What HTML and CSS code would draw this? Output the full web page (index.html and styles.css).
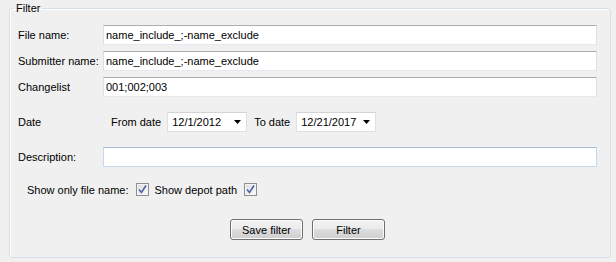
FILE: index.html
```html
<!DOCTYPE html>
<html lang="en">
  <head>
    <meta charset="UTF-8" />
    <title>Filter</title>
    <link rel="stylesheet" href="styles.css">
  </head>
  <body>
    <fieldset class="filter">
      <legend>Filter</legend>
      <div class="filter__body">
        <div class="row">
          <label class="row__label" for="fileName">File name:</label>
          <input class="text" id="fileName" type="text" value="name_include_;-name_exclude" />
        </div>
        <div class="row">
          <label class="row__label" for="submitter">Submitter name:</label>
          <input class="text" id="submitter" type="text" value="name_include_;-name_exclude" />
        </div>
        <div class="row">
          <label class="row__label" for="changelist">Changelist</label>
          <input class="text" id="changelist" type="text" value="001;002;003" />
        </div>
        <div class="row row--gap">
          <span class="row__label">Date</span>
          <span class="date-label">From date</span>
          <div class="combo">
            <span>12/1/2012</span>
            <svg width="7" height="4" viewBox="0 0 7 4"><polygon points="0,0 7,0 3.5,4" fill="#000" /></svg>
          </div>
          <span class="date-label">To date</span>
          <div class="combo">
            <span>12/21/2017</span>
            <svg width="7" height="4" viewBox="0 0 7 4"><polygon points="0,0 7,0 3.5,4" fill="#000" /></svg>
          </div>
        </div>
        <div class="row row--gap">
          <label class="row__label" for="description">Description:</label>
          <input class="text text--focus" id="description" type="text" value="" />
        </div>
        <div class="checks">
          <span>Show only file name:</span>
          <span class="check">
            <svg width="9" height="9" viewBox="0 0 9 9"><path d="M1 4.5 L3.5 7.5 L8 0.5" fill="none" stroke="#4b63a8" stroke-width="1.6" /></svg>
          </span>
          <span>Show depot path</span>
          <span class="check">
            <svg width="9" height="9" viewBox="0 0 9 9"><path d="M1 4.5 L3.5 7.5 L8 0.5" fill="none" stroke="#4b63a8" stroke-width="1.6" /></svg>
          </span>
        </div>
        <div class="buttons">
          <button type="button">Save filter</button>
          <button type="button">Filter</button>
        </div>
      </div>
    </fieldset>
  </body>
</html>
```

FILE: styles.css
```css
* {
  box-sizing: border-box;
}

body {
  margin: 0;
  padding: 1px 6px 0 9px;
  background: #f0f0f0;
  font-family: "Liberation Sans", Arial, sans-serif;
  font-size: 11px;
  color: #000;
}

.filter {
  margin: 0;
  width: 602px;
  height: 257px;
  padding: 10px 13px 0 8px;
  border: 1px solid #d5dfe5;
  border-radius: 3px;
  box-shadow: inset 1px 1px 0 #fff;
}

.filter legend {
  margin-left: -4px;
  padding: 0 2px;
  line-height: 14px;
}

.filter__body {
  display: flex;
  flex-direction: column;
}

.row {
  display: flex;
  align-items: center;
  height: 20px;
  margin-bottom: 6px;
}

.row--gap {
  margin-top: 9px;
}

.row__label {
  width: 85px;
  flex: none;
}

.text {
  flex: 1;
  height: 20px;
  margin: 0;
  padding: 0 2px;
  border: 1px solid #dbdfe6;
  border-top-color: #abadb3;
  border-bottom-color: #e3e9ef;
  border-radius: 0;
  background: #fff;
  font: inherit;
  color: #000;
  outline: none;
}

.text--focus {
  border-color: #c5daed;
  border-top-color: #a3bbd6;
}

.date-label {
  margin-left: 8px;
  margin-right: 6px;
}

.date-label + .combo + .date-label {
  margin-left: 7px;
}

.combo {
  display: flex;
  align-items: center;
  justify-content: space-between;
  width: 80px;
  height: 20px;
  padding: 0 5px 0 4px;
  border: 1px solid #e0e0e0;
  border-top-color: #d4d4d4;
  background: #fff;
}

.checks {
  display: flex;
  align-items: center;
  height: 13px;
  margin-top: 10px;
  padding-left: 9px;
}

.check {
  display: flex;
  align-items: center;
  justify-content: center;
  width: 13px;
  height: 13px;
  margin: 0 6px 0 7px;
  border: 1px solid #8e8f8f;
  background: linear-gradient(135deg, #dcdcdc, #fbfbfb);
  box-shadow: inset 0 0 0 1px #f4f4f4;
}

.buttons {
  display: flex;
  justify-content: center;
  gap: 9px;
  margin-top: 23px;
}

.buttons button {
  width: 73px;
  height: 21px;
  padding: 0;
  border: 1px solid #707070;
  border-radius: 3px;
  background: linear-gradient(#f2f2f2 0%, #ebebeb 50%, #dddddd 50%, #cfcfcf 100%);
  box-shadow: inset 0 0 0 1px #fcfcfc;
  font: inherit;
  color: #000;
}
```
